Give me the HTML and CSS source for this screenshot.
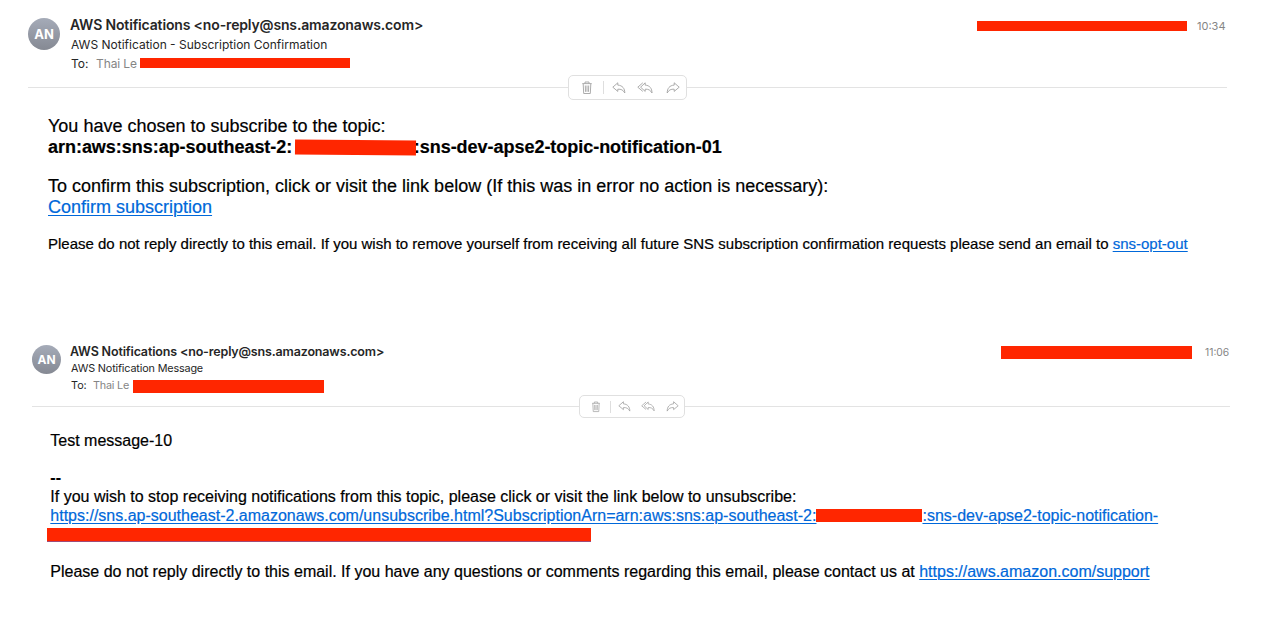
FILE: index.html
```html
<!DOCTYPE html>
<html lang="en">
<head>
<meta charset="utf-8">
<title>AWS Notifications</title>
<link rel="stylesheet" href="styles.css">
</head>
<body>
<svg class="symbols" aria-hidden="true">
  <symbol id="trash" viewBox="0 0 12 14"><path d="M1.300 2.600h9.400M4 2.600V1h4v1.600M2.200 2.800l.5 9.700h6.600l.5-9.700M4.300 4.500l.2 6.300M6 4.500v6.300M7.700 4.500l-.2 6.300"/></symbol>
  <symbol id="reply" viewBox="0 0 14 12"><path d="M5.800.8.8 5.200l5 4.200V7.200c3.300-.2 5.400.7 7 3.800C12.800 6.500 10.500 3.400 5.800 3.100z"/></symbol>
  <symbol id="reply-all" viewBox="0 0 16 12"><path d="M8.200.8 3.600 5.200l4.600 4.200V7.200c3.200-.2 5.200.8 6.800 3.800C15 6.500 12.800 3.400 8.200 3.100zM5.800.8.8 5.200l5 4.200"/></symbol>
</svg>
<main class="page">
  <article class="mail mail-first">
    <header class="head">
      <div class="avatar">AN</div>
      <div class="meta">
        <div class="sender">AWS Notifications &lt;no-reply@sns.amazonaws.com&gt;</div>
        <div class="subject">AWS Notification - Subscription Confirmation</div>
        <div class="to"><span class="label">To:</span><span class="name">Thai Le</span><i class="redact"></i></div>
      </div>
      <div class="stamp"><i class="redact"></i><time>10:34</time></div>
    </header>
    <div class="bar">
      <div class="tools">
        <svg class="trash"><use href="#trash"/></svg><i class="sep"></i><svg class="reply"><use href="#reply"/></svg><svg class="all"><use href="#reply-all"/></svg><svg class="forward"><use href="#reply"/></svg>
      </div>
    </div>
    <div class="body">
      <p>You have chosen to subscribe to the topic:<br><b class="arn"><span>arn:aws:sns:ap-southeast-2:</span><i class="redact"></i><span>:sns-dev-apse2-topic-notification-01</span></b></p>
      <p>To confirm this subscription, click or visit the link below (If this was in error no action is necessary):<br><a>Confirm subscription</a></p>
      <p class="small">Please do not reply directly to this email. If you wish to remove yourself from receiving all future SNS subscription confirmation requests please send an email to <a>sns-opt-out</a></p>
    </div>
  </article>
  <article class="mail mail-second">
    <header class="head">
      <div class="avatar">AN</div>
      <div class="meta">
        <div class="sender">AWS Notifications &lt;no-reply@sns.amazonaws.com&gt;</div>
        <div class="subject">AWS Notification Message</div>
        <div class="to"><span class="label">To:</span><span class="name">Thai Le</span><i class="redact"></i></div>
      </div>
      <div class="stamp"><i class="redact"></i><time>11:06</time></div>
    </header>
    <div class="bar">
      <div class="tools">
        <svg class="trash"><use href="#trash"/></svg><i class="sep"></i><svg class="reply"><use href="#reply"/></svg><svg class="all"><use href="#reply-all"/></svg><svg class="forward"><use href="#reply"/></svg>
      </div>
    </div>
    <div class="body">
      <p>Test message-10</p>
      <p><b>--</b><br>If you wish to stop receiving notifications from this topic, please click or visit the link below to unsubscribe:<br><a class="arn"><span>https://sns.ap-southeast-2.amazonaws.com/unsubscribe.html?SubscriptionArn=arn:aws:sns:ap-southeast-2:</span><i class="redact"></i><span>:sns-dev-apse2-topic-notification-</span></a><i class="redact tail"></i></p>
      <p>Please do not reply directly to this email. If you have any questions or comments regarding this email, please contact us at <a>https://aws.amazon.com/support</a></p>
    </div>
  </article>
</main>
</body>
</html>
```
FILE: styles.css
```css
* { box-sizing: border-box; }
body { margin: 0; background: #fff; color: #000; font-family: "Liberation Sans", Arial, sans-serif; }
p { margin: 0; }
.page { height: 617px; overflow: hidden; }
.symbols { display: none; }
.mail { white-space: nowrap; }
.head { display: flex; font-family: Inter, sans-serif; color: #262626; }
.avatar { flex: none; display: flex; align-items: center; justify-content: center; border-radius: 50%; background: linear-gradient(#a5abb8, #858993); color: #fff; font-weight: 700; }
.meta { flex: 1; }
.sender { font-weight: 600; }
.to { display: flex; align-items: center; }
.name, time { color: #858585; }
.redact { display: block; flex: none; background: #ff2600; }
.stamp { display: flex; align-items: center; }
.bar { display: flex; align-items: center; }
.bar::before, .bar::after { content: ""; height: 1px; background: #e3e3e3; flex: none; }
.bar::after { flex: 1; }
.tools { flex: none; display: flex; align-items: center; border: 1px solid #e0e0e0; border-radius: 5px; }
.tools svg { flex: none; fill: none; stroke: #a3a3a3; stroke-width: .9; }
.tools .forward { transform: scaleX(-1); }
.sep { width: 1px; background: #dedede; }
.body { -webkit-text-stroke: .2px currentColor; }
a { color: #0068da; text-decoration: underline; text-underline-offset: 1.5px; text-decoration-thickness: 1px; }
.arn { display: flex; align-items: center; }
a.arn { text-decoration: none; }
a.arn span { text-decoration: underline; }

.mail-first { height: 343px; padding: 16px 35px 0 28px; }
.mail-first .head { height: 59px; }
.mail-first .avatar { width: 32px; height: 32px; margin: 2px 10px 0 0; font-size: 13px; }
.mail-first .meta { line-height: 19px; font-size: 12px; }
.mail-first .sender { font-size: 14px; letter-spacing: -.15px; margin: -1px 0 1px; }
.mail-first .subject, .mail-first .to { padding-left: 1px; }
.mail-first .label { width: 25px; }
.mail-first .name { width: 44px; letter-spacing: -.1px; }
.mail-first .to .redact { width: 210px; height: 10px; margin-top: -2px; }
.mail-first .stamp { height: 20px; font-size: 11px; }
.mail-first .stamp .redact { width: 210px; height: 10px; margin: -1px 10px 0 0; }
.mail-first time { width: 30px; }
.mail-first .bar { height: 25px; }
.mail-first .bar::before { width: 540px; }
.mail-first .tools { width: 119px; height: 25px; padding-left: 12px; }
.mail-first .trash { width: 12px; height: 14px; }
.mail-first .sep { height: 13px; margin: 0 8px 0 10px; }
.mail-first .reply, .mail-first .forward { width: 14px; height: 12px; }
.mail-first .all { width: 16px; height: 12px; margin: 0 13px 0 11px; }
.mail-first .body { padding: 16px 0 0 20px; font-size: 18px; line-height: 21px; }
.mail-first p { margin-bottom: 18px; }
.mail-first .arn { letter-spacing: -.03px; }
.mail-first .arn .redact { width: 121px; height: 15px; margin: -1px -2px 0 2.5px; transform: rotate(.4deg); }
.mail-first .small { font-size: 15px; line-height: 18px; margin-top: -1px; }

.mail-second { padding: 0 32px 0 32px; }
.mail-second .head { height: 52px; }
.mail-second .avatar { width: 29px; height: 29px; margin: 2px 9px 0 0; font-size: 12px; }
.mail-second .meta { line-height: 17px; font-size: 10.8px; }
.mail-second .sender { font-size: 12.5px; letter-spacing: -.16px; }
.mail-second .subject { letter-spacing: -.15px; }
.mail-second .subject, .mail-second .to { padding-left: 1px; }
.mail-second .label { width: 22px; }
.mail-second .name { width: 40px; letter-spacing: -.2px; }
.mail-second .to .redact { width: 191px; height: 13px; margin-top: 1px; }
.mail-second .stamp { height: 18px; font-size: 10.3px; }
.mail-second .stamp .redact { width: 191px; height: 13px; margin-right: 13px; }
.mail-second time { width: 25px; }
.mail-second .bar { height: 23px; }
.mail-second .bar::before { width: 547px; }
.mail-second .tools { width: 106px; height: 23px; padding-left: 11px; }
.mail-second .trash { width: 10px; height: 12px; }
.mail-second .sep { height: 12px; margin: 0 7px 0 9px; }
.mail-second .reply, .mail-second .forward { width: 13px; height: 11px; }
.mail-second .all { width: 14px; height: 11px; margin: 0 11px 0 10px; }
.mail-second .body { padding: 14px 0 0 18.3px; font-size: 16px; line-height: 18.75px; }
.mail-second p { margin-bottom: 18.5px; }
.mail-second .arn .redact { width: 106px; height: 13px; margin-top: -1px; }
.mail-second .tail { width: 544px; height: 14px; margin: 2.5px 0 21px -3px; border-bottom: 1px solid #a04a78; }
```
